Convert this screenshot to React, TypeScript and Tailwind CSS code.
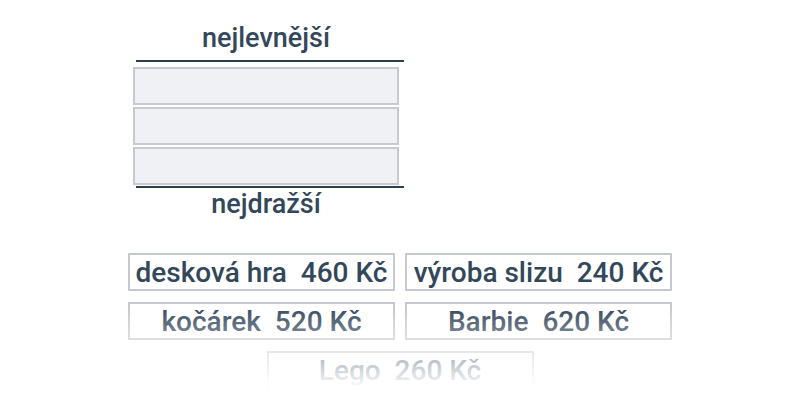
import React from "react";

const items = [
  "desková hra\u00a0\u00a0460 Kč",
  "výroba slizu\u00a0\u00a0240 Kč",
  "kočárek\u00a0\u00a0520 Kč",
  "Barbie\u00a0\u00a0620 Kč",
];

function Item({ label }: { label: string }) {
  return (
    <div className="w-[267px] h-[38px] border-2 border-[#c6cacf] bg-white flex items-center justify-center text-[28px] leading-none font-medium text-[#33475b] whitespace-nowrap">
      <span className="pt-[1px]">{label}</span>
    </div>
  );
}

export default function App() {
  return (
    <div
      className="relative w-[800px] h-[400px] bg-white overflow-hidden"
      style={{ fontFamily: "Roboto, 'Noto Sans', sans-serif" }}
    >
      <div className="flex flex-col ml-[133px] w-[271px]">
        <div className="pt-[23px] w-[266px] text-center text-[27px] leading-[30px] font-medium text-[#33475b]">
          nejlevnější
        </div>
        <div className="mt-[7px] ml-[3px] w-[268px] h-[2px] bg-[#2c3e50]" />
        <div className="mt-[5px] flex flex-col gap-[2px] w-[266px]">
          <div className="h-[38px] border-2 border-[#c6cacf] bg-[#eff1f5]" />
          <div className="h-[38px] border-2 border-[#c6cacf] bg-[#eff1f5]" />
          <div className="h-[38px] border-2 border-[#c6cacf] bg-[#eff1f5]" />
        </div>
        <div className="mt-[1px] ml-[3px] w-[268px] h-[2px] bg-[#2c3e50]" />
        <div className="pt-[3px] w-[266px] text-center text-[27px] leading-[26px] font-medium text-[#33475b]">
          nejdražší
        </div>
      </div>

      <div className="absolute left-0 right-0 top-[253px] flex flex-col items-center gap-[11px]">
        <div className="grid grid-cols-2 gap-x-[10px] gap-y-[11px]">
          {items.map((t) => (
            <Item key={t} label={t} />
          ))}
        </div>
        <Item label={"Lego\u00a0\u00a0260 Kč"} />
      </div>

      <div className="absolute left-0 right-0 top-[306px] h-[94px] bg-gradient-to-b from-white/0 to-white to-[88%]" />
    </div>
  );
}
